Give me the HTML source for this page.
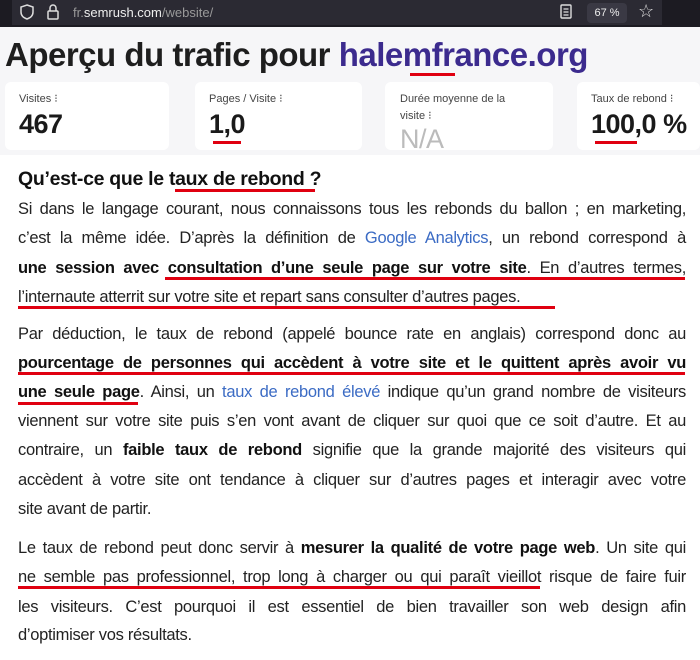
<!DOCTYPE html>
<html><head><meta charset="utf-8"><style>
*{margin:0;padding:0;box-sizing:border-box}
body{width:700px;height:660px;overflow:hidden;background:#fff;font-family:"Liberation Sans",sans-serif;position:relative;color:#222}
.top{position:absolute;left:0;top:0;width:700px;height:27px;background:#1c1b22}
.url{position:absolute;left:12px;top:0;width:650px;height:25px;background:#2b2a33}
.hdr{position:absolute;left:0;top:27px;width:700px;height:128px;background:#f6f6f8}
h1{position:absolute;left:5px;top:36px;font-size:33px;font-weight:bold;color:#1e1e1e;letter-spacing:-0.5px;white-space:nowrap}
h1 span{color:#3c2b8e}
.card{position:absolute;top:82px;height:68px;background:#fff;border-radius:6px}
.lab{position:absolute;font-size:11px;color:#444;line-height:17px}
.val{position:absolute;font-size:27px;color:#1a1a1a;letter-spacing:-0.5px;font-weight:bold}
.red{position:absolute;height:3px;background:#e00010}
.l{position:absolute;left:18px;width:668px;font-size:16.5px;letter-spacing:-0.3px;text-align:justify;text-align-last:justify;white-space:nowrap;line-height:20px;color:#222}
.l.n{text-align-last:left}
b{color:#111}
a{color:#3b6bc4;text-decoration:none}
</style></head><body>
<div class="top"><div class="url"></div>
<svg style="position:absolute;left:20px;top:4px" width="14" height="16" viewBox="0 0 14 16"><path d="M7 1 L13 3 V8 C13 12 10 14 7 15 C4 14 1 12 1 8 V3 Z" fill="none" stroke="#ddd" stroke-width="1.5"/></svg>
<svg style="position:absolute;left:47px;top:4px" width="12" height="16" viewBox="0 0 12 16"><rect x="1" y="7" width="10" height="8" rx="1" fill="none" stroke="#ddd" stroke-width="1.5"/><path d="M3 7 V4 a3 3 0 0 1 6 0 V7" fill="none" stroke="#ddd" stroke-width="1.5"/></svg>
<div style="position:absolute;left:73px;top:5px;font-size:13px;color:#999">fr.<span style="color:#eee">semrush.com</span>/website/</div>
<svg style="position:absolute;left:560px;top:4px" width="12" height="15" viewBox="0 0 12 15"><rect x="1" y="1" width="10" height="13" rx="1" fill="none" stroke="#ddd" stroke-width="1.4"/><path d="M3.5 5h5M3.5 8h5M3.5 11h5" stroke="#ddd" stroke-width="1.2"/></svg>
<div style="position:absolute;left:587px;top:3px;width:40px;height:20px;background:#3a3944;border-radius:4px;font-size:11px;color:#eee;text-align:center;line-height:20px">67 %</div>
<div style="position:absolute;left:638px;top:1px;font-size:18px;color:#ddd">☆</div>
</div>
<div class="hdr"></div>
<h1>Aperçu du trafic pour <span>halemfrance.org</span></h1>
<div class="red" style="left:410px;top:73px;width:45px"></div>
<div class="card" style="left:5px;width:164px"><div class="lab" style="left:14px;top:9px">Visites ⁝</div><div class="val" style="left:14px;top:27px">467</div></div>
<div class="card" style="left:195px;width:167px"><div class="lab" style="left:14px;top:9px">Pages / Visite ⁝</div><div class="val" style="left:14px;top:27px">1,0</div></div>
<div class="red" style="left:213px;top:141px;width:28px"></div>
<div class="card" style="left:385px;width:168px"><div class="lab" style="left:15px;top:9px;width:115px;white-space:normal">Durée moyenne de la visite ⁝</div><div class="val" style="left:15px;top:42px;color:#bbb;font-weight:normal">N/A</div></div>
<div class="card" style="left:577px;width:123px"><div class="lab" style="left:14px;top:9px">Taux de rebond ⁝</div><div class="val" style="left:14px;top:27px">100,0 %</div></div>
<div class="red" style="left:595px;top:141px;width:42px"></div>

<div style="position:absolute;left:18px;top:168px;font-size:19.5px;font-weight:bold;color:#111;letter-spacing:-0.3px">Qu’est-ce que le taux de rebond ?</div>
<div class="red" style="left:175px;top:189px;width:140px"></div>

<div class="l" style="top:199px">Si dans le langage courant, nous connaissons tous les rebonds du ballon ; en marketing,</div>
<div class="l" style="top:228px">c’est la même idée. D’après la définition de <a>Google Analytics</a>, un rebond correspond à</div>
<div class="l" style="top:258px"><b>une session avec consultation d’une seule page sur votre site</b>. En d’autres termes,</div>
<div class="red" style="left:165px;top:277px;width:520px"></div>
<div class="l n" style="top:287px">l’internaute atterrit sur votre site et repart sans consulter d’autres pages.</div>
<div class="red" style="left:18px;top:306px;width:537px"></div>

<div class="l" style="top:324px">Par déduction, le taux de rebond (appelé bounce rate en anglais) correspond donc au</div>
<div class="l" style="top:353px"><b>pourcentage de personnes qui accèdent à votre site et le quittent après avoir vu</b></div>
<div class="red" style="left:18px;top:372px;width:667px"></div>
<div class="l" style="top:382px"><b>une seule page</b>. Ainsi, un <a>taux de rebond élevé</a> indique qu’un grand nombre de visiteurs</div>
<div class="red" style="left:18px;top:402px;width:120px"></div>
<div class="l" style="top:411px">viennent sur votre site puis s’en vont avant de cliquer sur quoi que ce soit d’autre. Et au</div>
<div class="l" style="top:440px">contraire, un <b>faible taux de rebond</b> signifie que la grande majorité des visiteurs qui</div>
<div class="l" style="top:470px">accèdent à votre site ont tendance à cliquer sur d’autres pages et interagir avec votre</div>
<div class="l n" style="top:499px">site avant de partir.</div>

<div class="l" style="top:538px">Le taux de rebond peut donc servir à <b>mesurer la qualité de votre page web</b>. Un site qui</div>
<div class="l" style="top:567px">ne semble pas professionnel, trop long à charger ou qui paraît vieillot risque de faire fuir</div>
<div class="red" style="left:18px;top:586px;width:522px"></div>
<div class="l" style="top:597px">les visiteurs. C’est pourquoi il est essentiel de bien travailler son web design afin</div>
<div class="l n" style="top:625px">d’optimiser vos résultats.</div>
</body></html>
